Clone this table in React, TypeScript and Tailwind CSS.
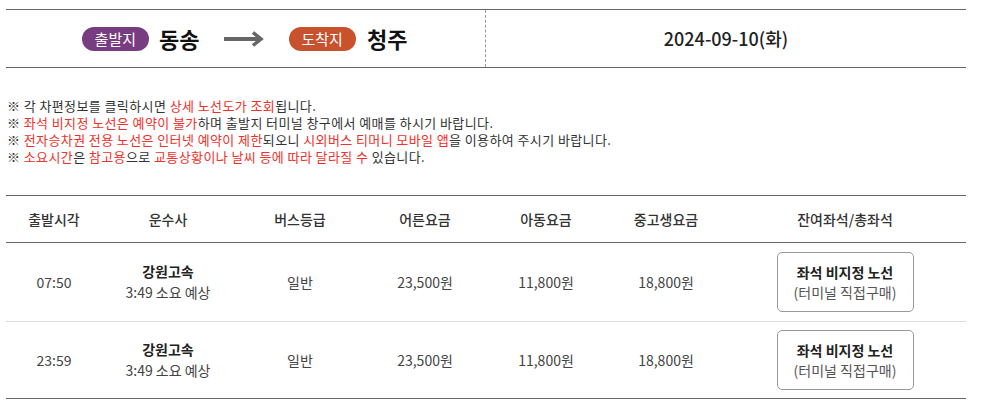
import React from "react";

const font = { fontFamily: '"Noto Sans CJK KR", "Noto Sans", sans-serif' };

type Seg = [string, boolean?];

const notes: Seg[][] = [
  [["각 차편정보를 클릭하시면 "], ["상세 노선도가 조회", true], ["됩니다."]],
  [["좌석 비지정 노선은 예약이 불가", true], ["하며 출발지 터미널 창구에서 예매를 하시기 바랍니다."]],
  [
    ["전자승차권 전용 노선은 인터넷 예약이 제한", true],
    ["되오니 "],
    ["시외버스 티머니 모바일 앱", true],
    ["을 이용하여 주시기 바랍니다."],
  ],
  [
    ["소요시간", true],
    ["은 "],
    ["참고용", true],
    ["으로 "],
    ["교통상황이나 날씨 등에 따라 달라질 수", true],
    [" 있습니다."],
  ],
];

const rows = [
  { time: "07:50", company: "강원고속", duration: "3:49 소요 예상", grade: "일반", adult: "23,500원", child: "11,800원", teen: "18,800원" },
  { time: "23:59", company: "강원고속", duration: "3:49 소요 예상", grade: "일반", adult: "23,500원", child: "11,800원", teen: "18,800원" },
];

const heads = ["출발시각", "운수사", "버스등급", "어른요금", "아동요금", "중고생요금", "잔여좌석/총좌석"];
const cols = "grid grid-cols-[96px_132px_132px_118px_124px_116px_1fr]";

const Arrow = () => (
  <svg width="40" height="16" viewBox="0 0 40 16" className="ml-[24px] mr-[25px]">
    <path d="M0 8 H36" stroke="#666" strokeWidth="4" />
    <path d="M29 1.5 L37 8 L29 14.5" stroke="#666" strokeWidth="3.5" fill="none" />
  </svg>
);

export default function App() {
  return (
    <div className="w-[994px] h-[405px] bg-white pl-[6px] pt-[9px] text-[#333]" style={font}>
      <div className="w-[960px]">
        {/* route header */}
        <div className="flex h-[59px] border-y border-[#666]">
          <div className="w-[480px] flex items-center justify-center border-r border-dashed border-[#999] pr-[2px]">
            <span className="h-[24px] px-[13px] rounded-full bg-[#773d80] text-white text-[15px] leading-[24px]">출발지</span>
            <span className="ml-[10px] text-[22px] font-bold text-[#111]">동송</span>
            <Arrow />
            <span className="h-[24px] px-[13px] rounded-full bg-[#c8512e] text-white text-[15px] leading-[24px]">도착지</span>
            <span className="ml-[11px] text-[22px] font-bold text-[#111]">청주</span>
          </div>
          <div className="flex-1 flex items-center justify-center text-[18px] font-medium text-[#222]">
            2024-09-10(화)
          </div>
        </div>

        {/* notes */}
        <div className="mt-[29px] pl-[1px] text-[13px] tracking-[0.4px] leading-[17px] text-[#333]">
          {notes.map((line, i) => (
            <div key={i}>
              ※{" "}
              {line.map(([t, red], j) => (
                <span key={j} className={red ? "text-[#f0302a]" : ""}>
                  {t}
                </span>
              ))}
            </div>
          ))}
        </div>

        {/* timetable */}
        <div className="mt-[30px] border-t border-[#666]">
          <div className={`${cols} h-[47px] items-center border-b border-[#666] text-[14px] font-medium text-[#333] text-center`}>
            {heads.map((h) => (
              <div key={h}>{h}</div>
            ))}
          </div>
          {rows.map((r, i) => (
            <div
              key={i}
              className={`${cols} ${i === 0 ? "h-[79px] border-b border-[#ddd]" : "h-[77px] border-b border-[#666]"} items-center text-[14px] text-[#444] text-center`}
            >
              <div>{r.time}</div>
              <div className="leading-[21px]">
                <div className="font-bold text-[#222]">{r.company}</div>
                <div>{r.duration}</div>
              </div>
              <div>{r.grade}</div>
              <div>{r.adult}</div>
              <div>{r.child}</div>
              <div>{r.teen}</div>
              <div className="flex justify-center">
                <button className="w-[137px] h-[60px] rounded-[5px] border border-[#999] bg-white leading-[20px]">
                  <div className="font-bold text-[#222]">좌석 비지정 노선</div>
                  <div className="text-[#555]">(터미널 직접구매)</div>
                </button>
              </div>
            </div>
          ))}
        </div>
      </div>
    </div>
  );
}
